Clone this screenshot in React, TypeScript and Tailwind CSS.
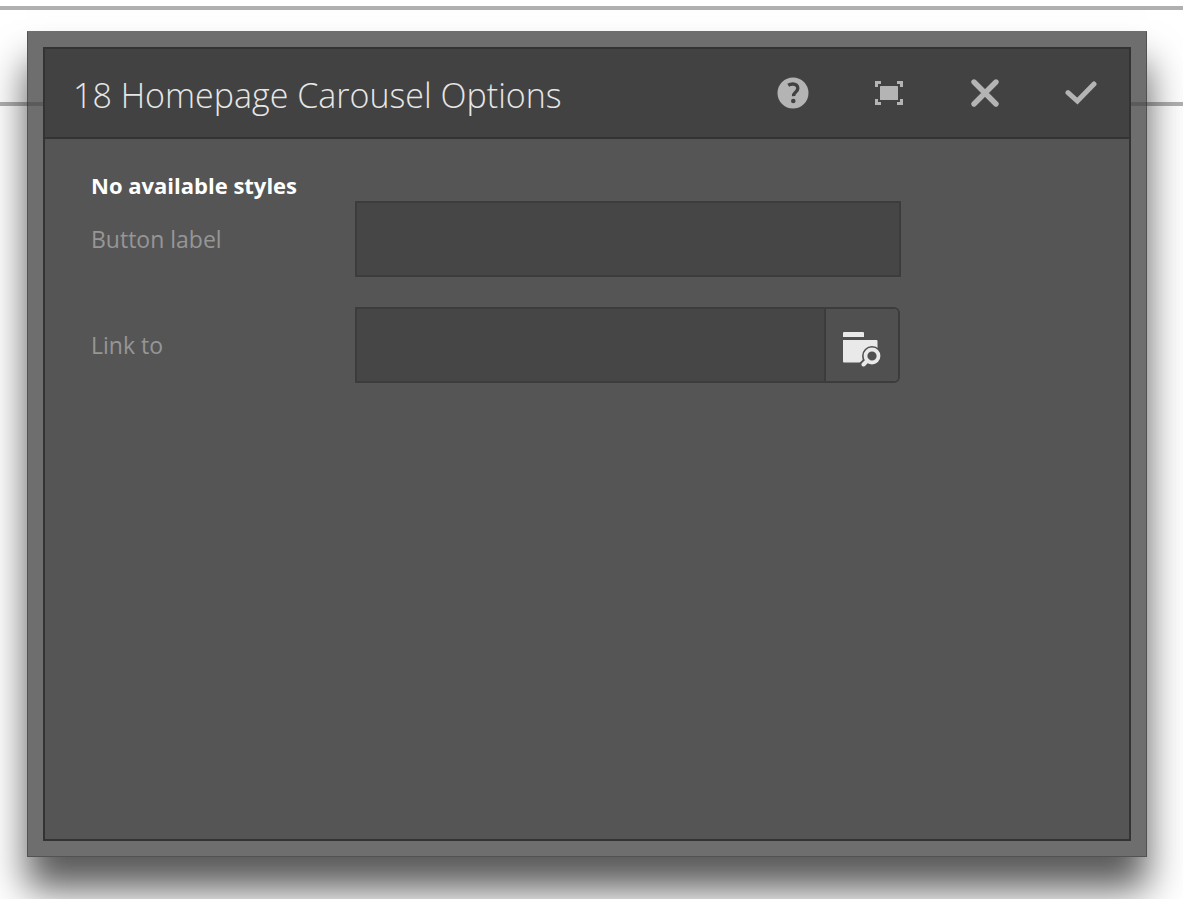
import { useState } from "react";
import type { ReactNode } from "react";

function HeaderButton({ label, children }: { label: string; children: ReactNode }) {
  return (
    <button
      type="button"
      aria-label={label}
      className="flex h-20 w-24 items-center justify-center text-[#b4b4b4] hover:text-white"
    >
      {children}
    </button>
  );
}

function HelpIcon() {
  return (
    <svg width="32" height="32" viewBox="0 0 32 32" aria-hidden="true">
      <circle cx="16" cy="16" r="15.5" fill="currentColor" />
      <path
        d="M11.2 8.300C12.800 7.300 14.300 7 15.800 7c3 0 5 1.700 5 4.200 0 2.200-1.300 3.300-2.500 4.300-1.300 1.100-1.800 1.700-1.700 3.700"
        fill="none"
        stroke="#424242"
        strokeWidth="3.400"
      />
      <circle cx="16.300" cy="24" r="2.300" fill="#424242" />
    </svg>
  );
}

function FullScreenIcon() {
  return (
    <svg width="30" height="26" viewBox="0 0 30 26" aria-hidden="true" fill="currentColor">
      <path d="M1 1h6v3H4v3H1zM23 1h6v6h-3V4h-3zM1 19h3v3h3v3H1zM26 19h3v6h-6v-3h3z" />
      <rect x="6" y="6" width="18" height="14" rx="0.500" />
    </svg>
  );
}

function CloseIcon() {
  return (
    <svg width="30" height="30" viewBox="0 0 30 30" aria-hidden="true">
      <path
        d="M4 4l22 22M26 4l-22 22"
        stroke="currentColor"
        strokeWidth="5.400"
        strokeLinecap="round"
        fill="none"
      />
    </svg>
  );
}

function CheckIcon() {
  return (
    <svg width="32" height="26" viewBox="0 0 32 26" aria-hidden="true">
      <path
        d="M3 12.600L12.400 21 29 4"
        stroke="currentColor"
        strokeWidth="5"
        strokeLinecap="round"
        fill="none"
      />
    </svg>
  );
}

function FolderSearchIcon() {
  return (
    <svg width="38" height="36" viewBox="0 0 38 36" aria-hidden="true">
      <path d="M0 6V2q0-1 1-1h19q1 0 1 1v4z" fill="#e9e9e9" />
      <path d="M0 9h33.500q1 0 1 1V31.500H1q-1 0-1-1z" fill="#e9e9e9" />
      <circle cx="29" cy="25" r="10" fill="#505050" />
      <path d="M25 29L18 36" stroke="#505050" strokeWidth="8" />
      <circle cx="29" cy="25" r="6.500" fill="#505050" stroke="#e9e9e9" strokeWidth="3.800" />
      <path d="M24.500 29.500l-4 4" stroke="#e9e9e9" strokeWidth="4" strokeLinecap="round" />
    </svg>
  );
}

export default function App() {
  const [label, setLabel] = useState("");
  const [link, setLink] = useState("");

  return (
    <div className="relative flex min-h-screen flex-col overflow-hidden bg-white pt-[31px] pr-9 pb-[42px] pl-[27px] font-['Open_Sans',sans-serif]">
      <div aria-hidden="true" className="absolute inset-x-0 top-[6px] h-[100px] border-y-4 border-[#b0b0b0]" />

      <div className="relative flex flex-1 flex-col border border-black/25 border-t-transparent bg-[#414141]/76 p-[15px] shadow-[0_32px_36px_rgba(0,0,0,0.65)]">
        <section
          role="dialog"
          aria-labelledby="dialog-title"
          className="flex flex-1 flex-col border-2 border-[#333333] bg-[#555555]"
        >
          <header className="flex h-[90px] items-center justify-between border-b-2 border-[#333333] bg-[#424242] pl-7">
            <h1 id="dialog-title" className="pt-1 text-[34px] font-light whitespace-nowrap text-[#e6e6e6]">
              18 Homepage Carousel Options
            </h1>
            <div className="flex shrink-0">
              <HeaderButton label="Help">
                <HelpIcon />
              </HeaderButton>
              <HeaderButton label="Toggle full screen">
                <FullScreenIcon />
              </HeaderButton>
              <HeaderButton label="Cancel">
                <CloseIcon />
              </HeaderButton>
              <HeaderButton label="Done">
                <CheckIcon />
              </HeaderButton>
            </div>
          </header>

          <form className="flex flex-col pt-[30px] pl-[46px]" onSubmit={(event) => event.preventDefault()}>
            <h2 className="h-8 text-[22px] leading-8 font-bold text-white">No available styles</h2>

            <div className="flex">
              <label htmlFor="button-label" className="w-[264px] shrink-0 text-[23px] leading-[76px] text-[#969696]">
                Button label
              </label>
              <input
                id="button-label"
                type="text"
                value={label}
                onChange={(event) => setLabel(event.target.value)}
                className="h-[76px] w-[546px] border-2 border-[#3c3c3c] bg-[#464646] px-4 text-[23px] text-[#e6e6e6] outline-none"
              />
            </div>

            <div className="mt-[30px] flex">
              <label htmlFor="link-to" className="w-[264px] shrink-0 text-[23px] leading-[76px] text-[#969696]">
                Link to
              </label>
              <div className="flex h-[76px] w-[545px] overflow-hidden rounded-r-md border-2 border-[#3c3c3c]">
                <input
                  id="link-to"
                  type="text"
                  value={link}
                  onChange={(event) => setLink(event.target.value)}
                  className="min-w-0 flex-1 bg-[#464646] px-4 text-[23px] text-[#e6e6e6] outline-none"
                />
                <button
                  type="button"
                  aria-label="Browse"
                  className="flex w-[74px] items-center justify-center border-l-2 border-[#3c3c3c] bg-[#505050] pt-2"
                >
                  <FolderSearchIcon />
                </button>
              </div>
            </div>
          </form>
        </section>
      </div>
    </div>
  );
}
